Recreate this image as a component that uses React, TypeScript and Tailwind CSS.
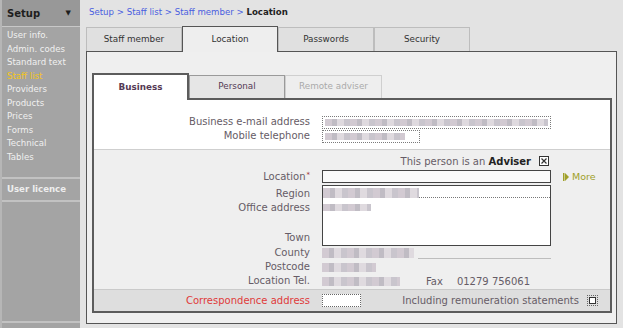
import { ReactNode } from 'react'

const sideItems = [
  'User info.',
  'Admin. codes',
  'Standard text',
  'Staff list',
  'Providers',
  'Products',
  'Prices',
  'Forms',
  'Technical',
  'Tables',
]

const outerTabs = ['Staff member', 'Location', 'Passwords', 'Security']

// pixelated stand-in for the blurred personal data
function Mosaic({ className }: { className: string }) {
  return (
    <div
      className={
        'bg-[repeating-linear-gradient(90deg,#d2cad2_0px,#d2cad2_7px,#c0bcc4_7px,#c0bcc4_12px,#dfdadf_12px,#dfdadf_19px,#c9c5cd_19px,#c9c5cd_25px)] ' +
        className
      }
    />
  )
}

function Label({ children, className = '' }: { children: ReactNode; className?: string }) {
  return <div className={'text-right text-[#665c66] leading-[14px] h-[14px] ' + className}>{children}</div>
}

export default function App() {
  return (
    <div className="flex h-[328px] w-[623px] overflow-hidden bg-[#e3e3e3] font-['DejaVu_Sans',sans-serif] text-[10px]">
      {/* Sidebar */}
      <aside className="w-[80px] shrink-0 flex flex-col bg-[#a4a4a4] border-l-2 border-[#b6b6b6] pb-[5px]">
        <div className="h-[27px] flex items-center justify-between pl-[5px] pr-[9px] bg-[#989898] border-b border-[#c8c8c8]">
          <span className="text-[10px] font-bold text-[#1e1e1e]">Setup</span>
          <span className="text-[7px] text-[#1e1e1e]">▼</span>
        </div>
        <ul className="pt-[2px] pl-[5px] h-[150px]">
          {sideItems.map((item) => (
            <li
              key={item}
              className={
                'text-[8.6px] leading-[13.55px] ' +
                (item === 'Staff list' ? 'text-[#f4c418]' : 'text-[#f0f0f0]')
              }
            >
              {item}
            </li>
          ))}
        </ul>
        <div className="h-[25px] flex items-center pl-[5px] border-y-2 border-[#c2c2c2] text-[8.6px] font-bold text-[#eeeeee]">
          User licence
        </div>
        <div className="flex-1 border-b-2 border-[#c2c2c2]" />
      </aside>

      {/* Main */}
      <main className="flex-1 flex flex-col">
        <div className="h-[26px] pl-[9px] pb-[2px] flex items-center text-[8.6px] text-[#4a5ee0]">
          Setup &gt; Staff list &gt; Staff member &gt;&nbsp;<b className="text-[#222]">Location</b>
        </div>

        <div className="ml-[6px] flex items-end h-[25px]">
          {outerTabs.map((t) =>
            t === 'Location' ? (
              <div
                key={t}
                className="relative z-10 mb-[-1px] w-[96px] h-[26px] flex items-center justify-center border border-b-0 border-[#555] bg-[#eeeeee] text-[8.8px] text-[#333]"
              >
                {t}
              </div>
            ) : (
              <div
                key={t}
                className="w-[96px] h-[24px] flex items-center justify-center border border-b-0 border-[#bdbdbd] bg-[#e0e0e0] text-[8.8px] text-[#333]"
              >
                {t}
              </div>
            )
          )}
        </div>

        <section className="flex-1 ml-[6px] mr-[6px] mb-[4px] border border-[#555] bg-[#efefef] pt-[21px] pl-[5px] pr-[4px] pb-[10px] flex flex-col">
          {/* Inner tabs */}
          <div className="flex items-end h-[25px]">
            <div className="relative z-10 mb-[-2px] w-[97px] h-[27px] flex items-center justify-center border-2 border-b-0 border-[#5c5c5c] bg-white text-[8.8px] font-bold text-[#553a55]">
              Business
            </div>
            <div className="w-[96px] h-[23px] flex items-center justify-center border border-b-0 border-[#9a9a9a] bg-[#e6e6e6] text-[8.8px] text-[#553a55]">
              Personal
            </div>
            <div className="w-[97px] h-[23px] flex items-center justify-center border border-b-0 border-[#cfcfcf] bg-[#eeeeee] text-[8.8px] text-[#aaaaaa]">
              Remote adviser
            </div>
          </div>

          <div className="flex-1 border-2 border-[#5c5c5c] flex flex-col">
            {/* Business contact */}
            <div className="h-[50px] bg-white border-b border-[#cfcfcf] pt-[15px] grid grid-cols-[216px_229px] gap-x-[12px] content-start">
              <Label>Business e-mail address</Label>
              <div className="h-[13px] mt-[1px] border border-dotted border-[#7a7a7a] p-[2px]">
                <Mosaic className="h-full w-full" />
              </div>
              <Label>Mobile telephone</Label>
              <div className="h-[13px] mt-[1px] w-[98px] border border-dotted border-[#7a7a7a] p-[2px]">
                <Mosaic className="h-full w-[80px]" />
              </div>
            </div>

            {/* Location */}
            <div className="flex-1 grid grid-cols-[216px_229px_1fr] gap-x-[12px] pt-[4px] content-start">
              <div className="col-span-2 h-[14px] flex items-center justify-end gap-[8px] pr-[2px] text-[#665c66]">
                <span>
                  This person is an <b className="text-[#222]">Adviser</b>
                </span>
                <svg width="10" height="10" viewBox="0 0 10 10">
                  <rect x="0.5" y="0.5" width="9" height="9" fill="white" stroke="#333" />
                  <path d="M2.5 2.5 L7.5 7.5 M7.5 2.5 L2.5 7.5" stroke="#333" strokeWidth="1.2" />
                </svg>
              </div>
              <div />

              <Label className="mt-[2px] text-[#333]">
                Location<sup className="text-[7px] ml-[1px] text-[#a03030]">*</sup>
              </Label>
              <div className="h-[13px] mt-[2px] border border-[#444] bg-[#fafafa]" />
              <div className="mt-[2px] flex items-center gap-[3px] text-[9.5px] text-[#a0a028]">
                <svg width="6" height="8" viewBox="0 0 6 8">
                  <rect x="0" y="0" width="1.5" height="8" fill="#a0a028" />
                  <path d="M2 0 L6 4 L2 8 Z" fill="#a0a028" />
                </svg>
                More
              </div>

              <div className="h-[61px] mt-[1px] flex flex-col pt-[2px]">
                <Label>Region</Label>
                <Label>Office address</Label>
                <div className="flex-1" />
                <Label className="mb-[1px]">Town</Label>
              </div>
              <div className="h-[61px] mt-[1px] border border-[#444] bg-white pt-[2px]">
                <div className="flex items-end">
                  <Mosaic className="h-[10px] w-[96px]" />
                  <div className="flex-1 border-b border-dotted border-[#777]" />
                </div>
                <Mosaic className="h-[7px] w-[48px] mt-[6px]" />
              </div>
              <div />

              <Label>County</Label>
              <div className="h-[14px] flex items-center">
                <Mosaic className="h-[10px] w-[92px]" />
                <div className="flex-1 self-end border-b border-[#bdbdbd] mb-[1px] ml-[4px]" />
              </div>
              <div />

              <Label>Postcode</Label>
              <div className="h-[14px] flex items-center">
                <Mosaic className="h-[9px] w-[54px]" />
              </div>
              <div />

              <Label>Location Tel.</Label>
              <div className="h-[14px] flex items-center text-[#665c66]">
                <Mosaic className="h-[9px] w-[78px]" />
                <span className="ml-[26px]">Fax</span>
                <span className="ml-[14px]">01279 756061</span>
              </div>
              <div />
            </div>

            {/* Correspondence */}
            <div className="h-[22px] bg-[#dedede] border-t border-[#cacaca] grid grid-cols-[216px_1fr] gap-x-[12px] items-center">
              <div className="text-right text-[#e03a3a]">Correspondence address</div>
              <div className="flex items-center pr-[12px]">
                <div className="w-[39px] h-[13px] border border-dotted border-[#666] bg-white" />
                <span className="ml-auto text-[#665c66]">Including remuneration statements</span>
                <div className="ml-[8px] w-[11px] h-[11px] border border-dotted border-[#666] p-[1px]">
                  <div className="w-full h-full border border-[#333] bg-white" />
                </div>
              </div>
            </div>
          </div>
        </section>
      </main>
    </div>
  )
}
